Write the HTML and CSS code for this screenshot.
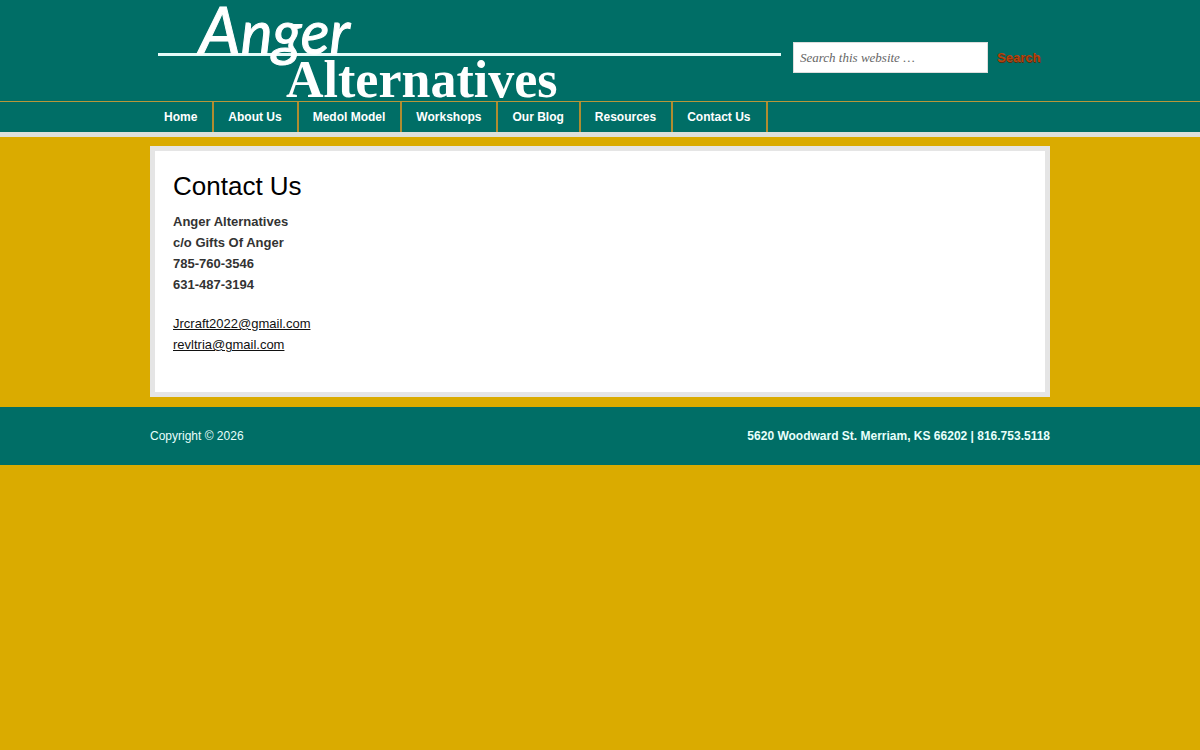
FILE: index.html
```html
<!DOCTYPE html>
<html lang="en">
<head>
<meta charset="utf-8">
<meta name="viewport" content="width=device-width, initial-scale=1">
<title>Contact Us</title>
<link rel="stylesheet" href="styles.css">
</head>
<body>
<header class="site-header">
  <div class="wrap header-row">
    <a class="logo" href="#" aria-label="Anger Alternatives">
      <svg class="logo-art" viewBox="0 0 631 101" width="631" height="101">
        <path class="logo-rule" d="M8 54.5H631"/>
        <text class="logo-script" x="49" y="54"><tspan class="logo-initial">A</tspan>nger</text>
        <text class="logo-serif" x="136" y="97">Alternatives</text>
      </svg>
    </a>
    <form class="search">
      <input class="search-field" type="search" placeholder="Search this website …" aria-label="Search this website">
      <button class="search-button" type="submit">Search</button>
    </form>
  </div>
</header>
<nav class="site-nav">
  <ul class="wrap menu">
    <li><a href="#">Home</a></li>
    <li><a href="#">About Us</a></li>
    <li><a href="#">Medol Model</a></li>
    <li><a href="#">Workshops</a></li>
    <li><a href="#">Our Blog</a></li>
    <li><a href="#">Resources</a></li>
    <li><a href="#">Contact Us</a></li>
  </ul>
</nav>
<main class="wrap content">
  <h1>Contact Us</h1>
  <p class="strong">Anger Alternatives<br>c/o Gifts Of Anger<br>785-760-3546<br>631-487-3194</p>
  <p><a href="mailto:Jrcraft2022@gmail.com">Jrcraft2022@gmail.com</a><br><a href="mailto:revltria@gmail.com">revltria@gmail.com</a></p>
</main>
<footer class="site-footer">
  <div class="wrap footer-row">
    <p>Copyright © 2026</p>
    <p class="address">5620 Woodward St. Merriam, KS 66202 | 816.753.5118</p>
  </div>
</footer>
</body>
</html>
```
FILE: styles.css
```css
* { box-sizing: border-box; }
body {
  margin: 0;
  background: #daab00;
  color: #333;
  font: 13px/21px "Liberation Sans", Arial, sans-serif;
}
p, h1, ul { margin: 0; }
.wrap { width: 100%; max-width: 900px; margin: 0 auto; }
.site-header, .site-nav, .site-footer { background: #006e66; }

.header-row { display: flex; }
.logo { flex: 0 1 631px; }
.logo-art { display: block; max-width: 100%; height: auto; overflow: visible; }
.logo-rule { stroke: #e4fbf8; stroke-width: 3; }
.logo-script { fill: #fff; stroke: #fff; stroke-width: 1; font: italic 60px Lato, sans-serif; }
.logo-initial { font-size: 66px; }
.logo-serif { fill: #fff; font: bold 52px "Liberation Serif", serif; }

.search { display: flex; align-items: center; gap: 9px; padding: 14px 0 0 12px; }
.search-field {
  width: 195px;
  height: 31px;
  margin: 0;
  padding: 0 6px;
  border: 1px solid #ddd;
  border-radius: 0;
  background: #fff;
  color: #666;
  font: italic 13px "Liberation Serif", serif;
}
.search-field::placeholder { color: #666; opacity: 1; }
.search-button {
  padding: 0;
  border: 0;
  background: none;
  color: #b8400a;
  font: bold 13px "Liberation Sans", Arial, sans-serif;
  text-shadow: 1px 1px #5a3010;
}

.site-nav { border-top: 1px solid #b8963a; border-bottom: 5px solid #dde0dc; }
.menu { display: flex; flex-wrap: wrap; padding: 0; list-style: none; }
.menu a {
  display: block;
  padding: 5px 15px 4px 14px;
  border-right: 2px solid #b08c30;
  color: #fff;
  font-size: 12px;
  font-weight: bold;
  text-decoration: none;
}

.content {
  margin: 9px auto 10px;
  padding: 19px 18px;
  border: 5px solid #e5e5e5;
  background: #fff;
}
.content h1 { margin-bottom: 9px; color: #000; font-size: 26px; font-weight: normal; line-height: 32px; }
.content p { margin-bottom: 18px; }
.content a { color: #111; }
.strong { font-weight: bold; }

.site-footer { padding: 19px 0 18px; color: #e8fffc; font-size: 12px; }
.footer-row { display: flex; justify-content: space-between; }
.address { font-weight: bold; }
```
